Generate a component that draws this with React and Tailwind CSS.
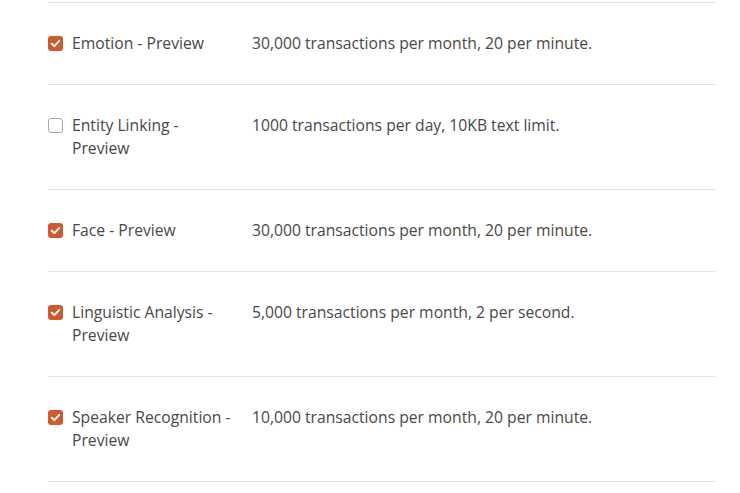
import React from 'react'

const rows = [
  { name: 'Emotion - Preview', checked: true, limit: '30,000 transactions per month, 20 per minute.' },
  { name: 'Entity Linking - Preview', checked: false, limit: '1000 transactions per day, 10KB text limit.' },
  { name: 'Face - Preview', checked: true, limit: '30,000 transactions per month, 20 per minute.' },
  { name: 'Linguistic Analysis - Preview', checked: true, limit: '5,000 transactions per month, 2 per second.' },
  { name: 'Speaker Recognition - Preview', checked: true, limit: '10,000 transactions per month, 20 per minute.' },
]

const Box = ({ checked }) =>
  checked ? (
    <span className="mt-[4px] flex h-[15px] w-[15px] shrink-0 items-center justify-center rounded-[3px] bg-[#cf5a2e]">
      <svg width="11" height="11" viewBox="0 0 10 10" fill="none">
        <path d="M1.6 5.2 L4 7.4 L8.4 2.6" stroke="white" strokeWidth="1.8" strokeLinecap="round" strokeLinejoin="round" />
      </svg>
    </span>
  ) : (
    <span className="mt-[4px] h-[15px] w-[15px] shrink-0 rounded-[3px] border border-[#a8a8a8] bg-white" />
  )

const App = () => {
  return (
    <div className="min-h-[493px] bg-white" style={{ fontFamily: '"Open Sans", "Noto Sans", sans-serif' }}>
      <div className="ml-[48px] w-[668px] pt-[2px]">
        {rows.map((r) => (
          <div key={r.name} className="flex border-t border-[#e3e3e3] py-[29px] text-[15.7px] leading-[23px] text-[#484848]">
            <div className="flex w-[204px] shrink-0 gap-[9px]">
              <Box checked={r.checked} />
              <span className="w-[164px]">{r.name}</span>
            </div>
            <div>{r.limit}</div>
          </div>
        ))}
        <div className="border-t border-[#e3e3e3]" />
      </div>
    </div>
  )
}

export default App
